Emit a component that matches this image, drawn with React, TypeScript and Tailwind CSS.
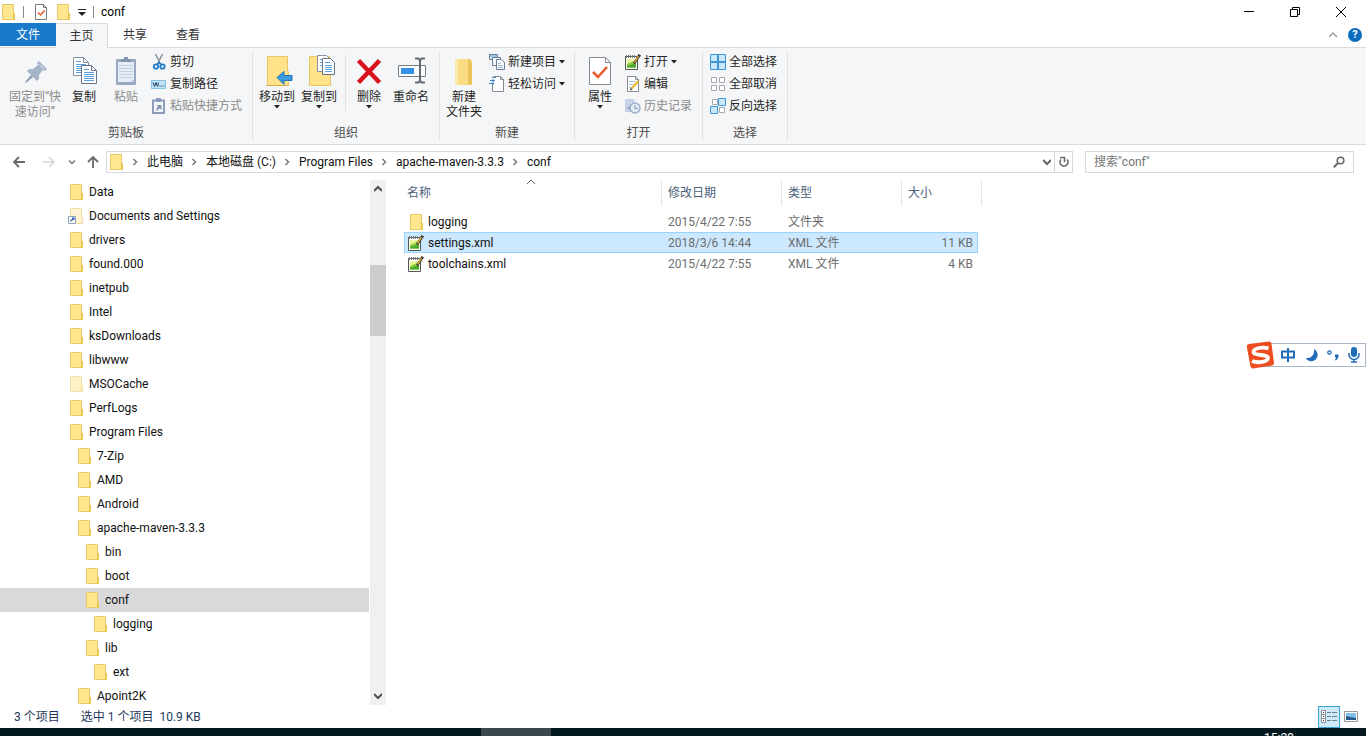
import React from 'react';

type IconProps = { className?: string };

const FolderIcon: React.FC<{ className?: string; faded?: boolean }> = ({ className = 'size-4', faded }) => (
  <svg viewBox="0 0 16 16" className={`shrink-0 ${className}`} opacity={faded ? 0.5 : 1}>
    <path d="M2 0h12v9h1v7H2z" fill="#ffe68f" />
    <path d="M2.5.5h11v9h1v6h-12z" fill="none" stroke="#e8c766" />
    <path d="M13 9h2v7h-2z" fill="#ecc652" />
  </svg>
);

const LinkedFolderIcon: React.FC = () => (
  <svg viewBox="0 0 16 16" className="size-4 shrink-0">
    <path d="M2 0h12v9h1v7H2z" fill="#fff3d3" />
    <path d="M2.5.5h11v9h1v6h-12z" fill="none" stroke="#f0dca8" />
    <path d="M.5 8.500h7v7h-7z" fill="#fff" stroke="#8fa3bd" />
    <path d="M2 14V13l2.500-2.500L3.500 9.500H6.500V12.500L5.500 11.500z" fill="#1d4fa8" />
  </svg>
);

const XmlIcon: React.FC<IconProps> = ({ className = 'size-4' }) => (
  <svg viewBox="0 0 16 16" className={`shrink-0 ${className}`}>
    <path d="M.5 2.500h12v13H.5z" fill="#fff" stroke="#4c5a50" />
    <path d="M2 5h9v8.500H2z" fill="#e9f59a" />
    <path d="M2 10l9-4v7.500H2z" fill="#8fce3c" />
    <path d="M2 12l9-3v4.500H2z" fill="#4bab2c" />
    <path d="M1.500 1v3M3.500 1v3M5.500 1v3M7.500 1v3M9.500 1v3" stroke="#777" />
    <path d="M14 2L9 9.500" stroke="#3b3b3b" strokeWidth="2.600" />
    <path d="M13.500 2L9.500 8.500" stroke="#f4b63a" strokeWidth="1.400" />
    <path d="M13.500 0l2.500 1.500-1 1.500-2.500-1.500z" fill="#333" />
  </svg>
);

const CheckDocIcon: React.FC<{ className: string }> = ({ className }) => (
  <svg viewBox="0 0 24 32" className={`shrink-0 ${className}`}>
    <path d="M1.500 2.500h16l5 5v22h-21z" fill="#fff" stroke="#858b92" />
    <path d="M17.500 2.500v5h5" fill="none" stroke="#858b92" />
    <path d="M5 17l5 5 9-10" fill="none" stroke="#ea5a24" strokeWidth="2.500" />
  </svg>
);

const SmallCheckDocIcon: React.FC = () => (
  <svg viewBox="0 0 12 16" className="h-4 w-3">
    <path d="M.5.500h8l3 3v12H.5z" fill="#fff" stroke="#747b84" />
    <path d="M8.500.5v3h3" fill="none" stroke="#747b84" />
    <path d="M3 8.500l2.500 2.500 4-4.500" fill="none" stroke="#e2582a" strokeWidth="1.500" />
  </svg>
);

const PinIcon: React.FC = () => (
  <svg viewBox="0 0 32 32" className="size-8">
    <path d="M20 6l8 8-2 2-2-1-4 5v4l-2 2-10-10 2-2h4l5-4-1-2z" fill="#a5b4c9" />
    <path d="M12 20l2 2-7 6-1-1z" fill="#8fa0b8" />
    <path d="M20 9l5 5" stroke="#c9d3e0" strokeWidth="1.500" />
  </svg>
);

const DocLines: React.FC<{ x: number; y: number; stroke: string }> = ({ x, y, stroke }) => (
  <g transform={`translate(${x} ${y})`}>
    <path d="M.5.5h10l5 5v13H.5z" fill="#fff" stroke={stroke} />
    <path d="M10.500.5v5h5" fill="none" stroke={stroke} />
    <path d="M3 4.500h5M3 7.500h10M3 9.500h10M3 11.500h10M3 13.500h10M3 15.500h10" stroke="#5ba0dc" />
  </g>
);

const CopyIcon: React.FC = () => (
  <svg viewBox="0 0 32 32" className="size-8">
    <DocLines x={5} y={2} stroke="#8591a3" />
    <DocLines x={13} y={10} stroke="#66758c" />
  </svg>
);

const PasteIcon: React.FC = () => (
  <svg viewBox="0 0 32 32" className="size-8">
    <rect x="6" y="4" width="20" height="26" rx="1" fill="#98a8c0" />
    <path d="M8 7h16v20H8z" fill="#e6edf7" />
    <path d="M9 10.500h14M9 13.500h14M9 16.500h14M9 19.500h14M9 22.500h14" stroke="#c2d0e4" />
    <path d="M11 7V4h3V2h4v2h3v3z" fill="#8394ae" />
    <path d="M21 27h3v-3z" fill="#b7c4d8" />
  </svg>
);

const MoveToIcon: React.FC = () => (
  <svg viewBox="0 0 32 32" className="size-8">
    <path d="M6.500 1.500h20v15h1v14h-21z" fill="#ffe28a" stroke="#e9c566" />
    <path d="M5.500 30.500h22" stroke="#dcae43" />
    <path d="M16 22.500l7-6v4h8v5h-8v4z" fill="#3b9be0" stroke="#2376b8" />
  </svg>
);

const CopyToIcon: React.FC = () => (
  <svg viewBox="0 0 32 32" className="size-8">
    <path d="M6.500 1.500h20v15h1v14h-21z" fill="#ffe28a" stroke="#e9c566" />
    <path d="M14.500.5h9l3 3v13h-12z" fill="#fff" stroke="#8591a3" />
    <path d="M17 4.500h6M17 7.500h7M17 10.500h7" stroke="#5ba0dc" />
    <path d="M19.500 3.500h8l4 4v12h-12z" fill="#fff" stroke="#66758c" />
    <path d="M22 7.500h5M22 10.500h7M22 12.500h7M22 14.500h7M22 16.500h7" stroke="#5ba0dc" />
  </svg>
);

const DeleteIcon: React.FC = () => (
  <svg viewBox="0 0 32 32" className="size-8">
    <path d="M5.500 5.500l21 22M26.500 5.500l-21 22" stroke="#d9111f" strokeWidth="4.500" />
  </svg>
);

const RenameIcon: React.FC = () => (
  <svg viewBox="0 0 32 32" className="size-8">
    <path d="M3.500 10.500h27v11h-27z" fill="#fff" stroke="#737b86" />
    <path d="M6 13h13v6H6z" fill="#3390e6" />
    <path d="M20 3.500h3.500l1.500 2 1.500-2H30M20 27.500h3.500l1.500-2 1.500 2H30M25 5v21" fill="none" stroke="#646b75" strokeWidth="2" />
  </svg>
);

const NewFolderIcon: React.FC = () => (
  <svg viewBox="0 0 32 32" className="size-8">
    <path d="M7 4h14v12l3 1v13H7z" fill="#f9dc82" />
    <path d="M7 4h3v26H7z" fill="#fbe9b0" />
    <path d="M20 4h2l2 3v22l-4 1z" fill="#edc35c" />
  </svg>
);

const CutIcon: React.FC = () => (
  <svg viewBox="0 0 16 16" className="size-4 shrink-0">
    <path d="M4.500 0l5 10M11.500 0l-5 10" stroke="#8a929c" strokeWidth="1.500" />
    <circle cx="5" cy="12.500" r="2.200" fill="none" stroke="#1f7cc9" strokeWidth="1.800" />
    <circle cx="11.500" cy="12.500" r="2.200" fill="none" stroke="#1f7cc9" strokeWidth="1.800" />
    <path d="M6 10.500l2-2 2 2" fill="none" stroke="#1f7cc9" strokeWidth="1.500" />
  </svg>
);

const PathIcon: React.FC = () => (
  <svg viewBox="0 0 16 16" className="size-4 shrink-0">
    <path d="M.5 4.500h14v8H.5z" fill="#bfe3f8" stroke="#85bfe2" />
    <path d="M2 6.500l1.500 4 1.500-4 1.500 4 1-4M8.500 10h1M10.500 10h1M12.500 10h1" fill="none" stroke="#233f66" />
  </svg>
);

const PasteLinkIcon: React.FC = () => (
  <svg viewBox="0 0 16 16" className="size-4 shrink-0">
    <path d="M2 2.500h11v12.500H2z" fill="#f3f6fa" stroke="#8c9cba" strokeWidth="2" />
    <path d="M5 0h5v4H5z" fill="#8c9cba" />
    <path d="M5 12.500l1-3 1-1L5.500 7H10.500v5L9 10.500l-1.500.5-1 1.500z" fill="#8394b4" />
  </svg>
);

const NewItemIcon: React.FC = () => (
  <svg viewBox="0 0 16 16" className="size-4 shrink-0">
    <path d="M.5.5h8v5h-8z" fill="#d4ebfa" stroke="#6b7d94" />
    <path d="M3.500 3.500h8v8h-8z" fill="#f2f8fd" stroke="#6b7d94" />
    <path d="M7.500 5.500h5l3 3v7h-8z" fill="#fff" stroke="#6b7d94" />
    <path d="M1 2h7" stroke="#58a5dc" />
    <path d="M9 9.500h3M9 11.500h5M9 13.500h5" stroke="#9ab9d5" />
  </svg>
);

const EasyAccessIcon: React.FC = () => (
  <svg viewBox="0 0 16 16" className="size-4 shrink-0">
    <path d="M3.500 8V15.500h11v-12l-3-3h-7" fill="#fff" stroke="#848b94" />
    <path d="M11.500.5v3h3" fill="none" stroke="#848b94" />
    <path d="M3 1.500h4M1 4.500h5M0 7.500h5M4 3v6" stroke="#3f87c7" />
  </svg>
);

const EditIcon: React.FC = () => (
  <svg viewBox="0 0 16 16" className="size-4 shrink-0">
    <path d="M2.500.5h8l3 3v12h-11z" fill="#fff" stroke="#858b92" />
    <path d="M10.500.5v3h3" fill="none" stroke="#858b92" />
    <path d="M4 5.500h6M4 8.500h4M4 11.500h3" stroke="#9cc3e4" />
    <path d="M13.500 5l-7 7.500" stroke="#eebc3c" strokeWidth="2.500" />
    <path d="M5 14.500l.5-3 2 2z" fill="#4c4c4c" />
  </svg>
);

const HistoryIcon: React.FC = () => (
  <svg viewBox="0 0 16 16" className="size-4 shrink-0">
    <path d="M0 1h9l1 4H6v9H0z" fill="#c6d2e7" />
    <circle cx="10" cy="10" r="5" fill="#e5ebf5" stroke="#9dafcf" strokeWidth="1.500" />
    <path d="M10 7v3.500h3M5 9l-2 1 3 2" fill="none" stroke="#8da0c4" strokeWidth="1.200" />
  </svg>
);

const SelectAllIcon: React.FC = () => (
  <svg viewBox="0 0 16 16" className="size-4 shrink-0">
    <path d="M.5.5h15v15H.5z" fill="#c9e8fc" stroke="#3c96d6" />
    <path d="M8 0v16M0 8h16" stroke="#3c96d6" strokeWidth="2" />
  </svg>
);

const SelectNoneIcon: React.FC = () => (
  <svg viewBox="0 0 16 16" className="size-4 shrink-0">
    <path d="M1.500 1.500h5v5h-5zM9.500 1.500h5v5h-5zM1.500 9.500h5v5h-5zM9.500 9.500h5v5h-5z" fill="#fff" stroke="#a5a9ae" />
  </svg>
);

const InvertIcon: React.FC = () => (
  <svg viewBox="0 0 16 16" className="size-4 shrink-0">
    <path d="M2.500 1.500h5v5h-5zM9.500 9.500h5v5h-5z" fill="#fff" stroke="#a5a9ae" />
    <path d="M8.500.5h7v7h-7zM.5 8.500h7v7h-7z" fill="#c9e8fc" stroke="#3c96d6" />
  </svg>
);

const Caret: React.FC = () => (
  <svg viewBox="0 0 6 4" className="h-1 w-1.5 shrink-0">
    <path d="M0 0h6L3 3.500z" fill="#222" />
  </svg>
);

const Chevron: React.FC<{ d: string; className?: string; width?: number }> = ({ d, className = '', width = 2 }) => (
  <svg viewBox="0 0 8 8" className={`size-2 shrink-0 ${className}`}>
    <path d={d} fill="none" stroke="currentColor" strokeWidth={width} />
  </svg>
);

const UP = 'M0 6l4-4 4 4';
const DOWN = 'M0 2l4 4 4-4';

type BigProps = { icon: React.ReactNode; label: React.ReactNode; caret?: boolean; disabled?: boolean; wide?: boolean };

const BigButton: React.FC<BigProps> = ({ icon, label, caret, disabled, wide }) => (
  <button
    disabled={disabled}
    className={`mt-1 flex shrink-0 flex-col items-center text-[#262626] disabled:text-[#8b8b8b] ${wide ? 'w-14' : 'w-[42px]'}`}
  >
    {icon}
    <span className="mt-[3px] leading-[15px] whitespace-nowrap">{label}</span>
    {caret && <Caret />}
  </button>
);

const SmallButton: React.FC<BigProps> = ({ icon, label, caret, disabled }) => (
  <button
    disabled={disabled}
    className="flex h-[22px] items-center gap-[3px] whitespace-nowrap text-[#262626] disabled:text-[#8b8b8b]"
  >
    {icon}
    <span>{label}</span>
    {caret && <Caret />}
  </button>
);

const Group: React.FC<{ title: string; className: string; children: React.ReactNode }> = ({ title, className, children }) => (
  <section className="flex shrink-0 py-[3px]">
    <div className="flex flex-col justify-between">
      <div className={`flex items-start ${className}`}>{children}</div>
      <h2 className="text-center leading-4 text-[#4d4d4d]">{title}</h2>
    </div>
    <div className="w-px bg-[#e2e3e4]" />
  </section>
);

const TREE = [
  { name: 'Data', level: 0 },
  { name: 'Documents and Settings', level: 0, link: true },
  { name: 'drivers', level: 0 },
  { name: 'found.000', level: 0 },
  { name: 'inetpub', level: 0 },
  { name: 'Intel', level: 0 },
  { name: 'ksDownloads', level: 0 },
  { name: 'libwww', level: 0 },
  { name: 'MSOCache', level: 0, faded: true },
  { name: 'PerfLogs', level: 0 },
  { name: 'Program Files', level: 0 },
  { name: '7-Zip', level: 1 },
  { name: 'AMD', level: 1 },
  { name: 'Android', level: 1 },
  { name: 'apache-maven-3.3.3', level: 1 },
  { name: 'bin', level: 2 },
  { name: 'boot', level: 2 },
  { name: 'conf', level: 2, selected: true },
  { name: 'logging', level: 3 },
  { name: 'lib', level: 2 },
  { name: 'ext', level: 3 },
  { name: 'Apoint2K', level: 1 },
];

const INDENT = ['pl-[68px]', 'pl-[76px]', 'pl-[84px]', 'pl-[92px]'];

const FILES = [
  { name: 'logging', date: '2015/4/22 7:55', type: '文件夹', size: '', folder: true },
  { name: 'settings.xml', date: '2018/3/6 14:44', type: 'XML 文件', size: '11 KB', selected: true },
  { name: 'toolchains.xml', date: '2015/4/22 7:55', type: 'XML 文件', size: '4 KB' },
];

const CRUMBS = ['此电脑', '本地磁盘 (C:)', 'Program Files', 'apache-maven-3.3.3', 'conf'];

const TitleBar: React.FC = () => (
  <header className="flex h-[23px] shrink-0 items-center">
    <FolderIcon />
    <span className="ml-[7px] h-3 w-px bg-[#8a8a8a]" />
    <button aria-label="属性" className="ml-[11px]">
      <SmallCheckDocIcon />
    </button>
    <button aria-label="新建文件夹" className="ml-2">
      <FolderIcon />
    </button>
    <button aria-label="自定义快速访问工具栏" className="ml-[7px]">
      <svg viewBox="0 0 8 8" className="size-2">
        <path d="M0 1.500h8" stroke="#222" />
        <path d="M0 4h8L4 8z" fill="#222" />
      </svg>
    </button>
    <span className="ml-[7px] h-3 w-px bg-[#8a8a8a]" />
    <h1 className="ml-[7px] text-black">conf</h1>
    <div className="ml-auto flex pr-0.5 text-black">
      <button aria-label="最小化" className="flex h-5 w-[46px] items-center justify-center">
        <svg viewBox="0 0 10 10" className="size-2.5">
          <path d="M0 4.500h10" stroke="currentColor" />
        </svg>
      </button>
      <button aria-label="还原" className="flex h-5 w-[46px] items-center justify-center">
        <svg viewBox="0 0 10 10" className="size-2.5">
          <path d="M.5 2.500h7v7h-7zM2.500 2.500v-2h7v7h-2" fill="none" stroke="currentColor" />
        </svg>
      </button>
      <button aria-label="关闭" className="flex h-5 w-[46px] items-center justify-center">
        <svg viewBox="0 0 10 10" className="size-2.5">
          <path d="M0 0l10 10M10 0L0 10" stroke="currentColor" />
        </svg>
      </button>
    </div>
  </header>
);

const Tabs: React.FC = () => (
  <nav className="flex h-[25px] shrink-0 items-stretch border-b border-[#dadbdc] text-[#333]">
    <button className="mb-px w-14 bg-[#1979ca] text-white">文件</button>
    <button className="-mb-px w-[52px] border-t border-r border-[#dadbdc] bg-[#f5f6f7]">主页</button>
    <button className="w-[54px]">共享</button>
    <button className="w-[52px]">查看</button>
    <div className="ml-auto flex items-center gap-[11px] pr-1">
      <button aria-label="最小化功能区" className="text-[#9a9a9a]">
        <Chevron d={UP} width={1.5} />
      </button>
      <button aria-label="帮助" className="flex size-3.5 items-center justify-center rounded-full bg-[#0a6cbd] text-[11px] font-bold text-white">
        ?
      </button>
    </div>
  </nav>
);

const Ribbon: React.FC = () => (
  <div className="flex h-[97px] shrink-0 border-b border-[#dadbdc] bg-[#f5f6f7]">
    <Group title="剪贴板" className="pr-2.5 pl-[7px]">
      <BigButton icon={<PinIcon />} label={<>固定到“快<br />速访问”</>} disabled wide />
      <BigButton icon={<CopyIcon />} label="复制" />
      <BigButton icon={<PasteIcon />} label="粘贴" disabled />
      <div className="ml-1">
        <SmallButton icon={<CutIcon />} label="剪切" />
        <SmallButton icon={<PathIcon />} label="复制路径" />
        <SmallButton icon={<PasteLinkIcon />} label="粘贴快捷方式" disabled />
      </div>
    </Group>
    <Group title="组织" className="pr-[7px] pl-[3px]">
      <BigButton icon={<MoveToIcon />} label="移动到" caret />
      <BigButton icon={<CopyToIcon />} label="复制到" caret />
      <div className="mt-1 mr-0.5 ml-[5px] h-14 w-px bg-[#e2e3e4]" />
      <BigButton icon={<DeleteIcon />} label="删除" caret />
      <BigButton icon={<RenameIcon />} label="重命名" />
    </Group>
    <Group title="新建" className="pr-[9px] pl-[3px]">
      <BigButton icon={<NewFolderIcon />} label={<>新建<br />文件夹</>} />
      <div className="ml-1">
        <SmallButton icon={<NewItemIcon />} label="新建项目" caret />
        <SmallButton icon={<EasyAccessIcon />} label="轻松访问" caret />
      </div>
    </Group>
    <Group title="打开" className="pr-[10px] pl-1">
      <BigButton icon={<CheckDocIcon className="h-8 w-6" />} label="属性" caret />
      <div className="ml-1">
        <SmallButton icon={<XmlIcon />} label="打开" caret />
        <SmallButton icon={<EditIcon />} label="编辑" />
        <SmallButton icon={<HistoryIcon />} label="历史记录" disabled />
      </div>
    </Group>
    <Group title="选择" className="pr-[10px] pl-[7px]">
      <div>
        <SmallButton icon={<SelectAllIcon />} label="全部选择" />
        <SmallButton icon={<SelectNoneIcon />} label="全部取消" />
        <SmallButton icon={<InvertIcon />} label="反向选择" />
      </div>
    </Group>
  </div>
);

const AddressBar: React.FC = () => (
  <div className="flex h-[35px] shrink-0 items-center px-3 pb-0.5">
    <button aria-label="后退" className="text-[#6a6a6a]">
      <svg viewBox="0 0 14 14" className="size-3.5">
        <path d="M13 7H2M7 2L2 7l5 5" fill="none" stroke="currentColor" strokeWidth="1.800" />
      </svg>
    </button>
    <button aria-label="前进" disabled className="ml-4 text-[#d3d3d3]">
      <svg viewBox="0 0 14 14" className="size-3.5">
        <path d="M1 7h11M7 2l5 5-5 5" fill="none" stroke="currentColor" strokeWidth="1.500" />
      </svg>
    </button>
    <button aria-label="最近浏览的位置" className="ml-3 text-[#777]">
      <Chevron d="M1 2.500l3 3 3-3" width={1.5} />
    </button>
    <button aria-label="上移" className="ml-2.5 text-[#6a6a6a]">
      <svg viewBox="0 0 14 14" className="size-3.5">
        <path d="M7 13V2M2 7l5-5 5 5" fill="none" stroke="currentColor" strokeWidth="1.800" />
      </svg>
    </button>
    <div className="ml-1.5 flex h-[22px] min-w-0 flex-1 items-center border border-[#d9d9d9] pl-px text-[#111]">
      <FolderIcon />
      <ol className="flex min-w-0 items-center whitespace-nowrap">
        {CRUMBS.map((crumb) => (
          <li key={crumb} className="flex items-center">
            <Chevron d="M2.500 1l3 3-3 3" width={1.5} className="mr-2 ml-[7px] text-[#777]" />
            <a href="#">{crumb}</a>
          </li>
        ))}
      </ol>
      <button aria-label="以前的位置" className="ml-auto pr-[3px] text-[#666]">
        <Chevron d={DOWN} />
      </button>
      <button aria-label="刷新" className="flex h-full w-[18px] items-center justify-center border-l border-[#d9d9d9] text-[#666]">
        <svg viewBox="0 0 12 12" className="size-3">
          <path d="M3 3.500a4 4 0 1 0 6 0" fill="none" stroke="currentColor" strokeWidth="1.600" />
          <path d="M2 1.500h4.500V6" fill="none" stroke="currentColor" strokeWidth="1.600" />
        </svg>
      </button>
    </div>
    <form className="ml-3 flex h-[22px] w-[269px] shrink-0 items-center border border-[#d9d9d9] px-2">
      <input
        type="text"
        aria-label="搜索"
        placeholder={'搜索"conf"'}
        className="min-w-0 flex-1 bg-transparent outline-none placeholder:text-[#757575]"
      />
      <button type="button" aria-label="开始搜索" className="text-[#666]">
        <svg viewBox="0 0 12 12" className="size-3">
          <circle cx="7.500" cy="4.500" r="3.300" fill="none" stroke="currentColor" strokeWidth="1.600" />
          <path d="M5 7L.8 11.200" stroke="currentColor" strokeWidth="2" />
        </svg>
      </button>
    </form>
  </div>
);

const TreePane: React.FC = () => (
  <aside className="flex shrink-0">
    <ul className="w-[369px] overflow-hidden text-[#111]">
      {TREE.map((item) => (
        <li key={`${item.name}-${item.level}`}>
          <button className={`flex h-6 w-full items-center gap-[5px] ${INDENT[item.level]} ${item.selected ? 'bg-[#d9d9d9]' : ''}`}>
            {item.link ? <LinkedFolderIcon /> : <FolderIcon faded={item.faded} />}
            {item.name}
          </button>
        </li>
      ))}
    </ul>
    <div className="ml-px flex w-4 flex-col items-center bg-[#f0f0f0] py-[5px] text-[#505050]">
      <Chevron d={UP} />
      <div className="mt-[72px] h-[71px] w-full bg-[#cdcdcd]" />
      <Chevron d={DOWN} className="mt-auto" />
    </div>
  </aside>
);

const FilePane: React.FC = () => (
  <main className="min-w-0 flex-1 pl-[18px]">
    <table className="w-[578px] table-fixed border-separate border-spacing-0 text-left">
      <colgroup>
        <col className="w-[258px]" />
        <col className="w-[120px]" />
        <col className="w-[120px]" />
        <col className="w-[76px]" />
        <col className="w-1" />
      </colgroup>
      <thead>
        <tr className="h-[31px] align-top text-[#4c607a]">
          <th className="font-normal">
            <div className="relative flex h-[26px] items-center border-r border-[#e5e5e5] pl-[3px]">
              名称
              <Chevron d={UP} width={1} className="absolute -top-0.5 left-[123px] text-[#666]" />
            </div>
          </th>
          <th className="font-normal">
            <div className="flex h-[26px] items-center border-r border-[#e5e5e5] pl-1.5">修改日期</div>
          </th>
          <th className="font-normal">
            <div className="flex h-[26px] items-center border-r border-[#e5e5e5] pl-1.5">类型</div>
          </th>
          <th colSpan={2} className="font-normal">
            <div className="flex h-[26px] items-center border-r border-[#e5e5e5] pl-1.5">大小</div>
          </th>
        </tr>
      </thead>
      <tbody>
        {FILES.map((file) => {
          const tone = file.selected ? 'border-[#99d1ff] bg-[#cce8ff]' : 'border-transparent';
          return (
            <tr key={file.name} className="h-[21px] text-[#6d6d6d]">
              <td className={`border-y border-l ${tone}`}>
                <div className="flex items-center gap-1 pl-[3px] text-[#111]">
                  {file.folder ? <FolderIcon /> : <XmlIcon />}
                  {file.name}
                </div>
              </td>
              <td className={`border-y pl-1.5 ${tone}`}>{file.date}</td>
              <td className={`border-y pl-1.5 ${tone}`}>{file.type}</td>
              <td className={`border-y border-r pr-1 text-right ${tone}`}>{file.size}</td>
              <td />
            </tr>
          );
        })}
      </tbody>
    </table>
  </main>
);

const StatusBar: React.FC = () => (
  <footer className="flex h-[23px] shrink-0 items-center pr-2 pl-3.5 text-[#1e395b]">
    <span>3 个项目</span>
    <span className="ml-[21px]">选中 1 个项目</span>
    <span className="ml-1.5">10.9 KB</span>
    <div className="ml-auto flex items-center gap-1">
      <button aria-label="详细信息" className="flex size-[22px] items-center justify-center border border-[#3aa3d8] bg-[#cdeaf8]">
        <svg viewBox="0 0 16 14" className="h-3.5 w-4">
          <path d="M.5.5h4v4h-4zM.5 4.500h4v4h-4zM.5 8.500h4v4h-4z" fill="#fff" stroke="#8b8f94" />
          <path d="M2 2.500h1M2 6.500h1M2 10.500h1" stroke="#333" />
          <path d="M6 2.500h4M11 2.500h5M6 6.500h4M11 6.500h5M6 10.500h4M11 10.500h5" stroke="#6c7c8a" />
        </svg>
      </button>
      <button aria-label="大图标">
        <svg viewBox="0 0 14 12" className="h-3 w-3.5">
          <path d="M.5.5h13v10H.5z" fill="#fff" stroke="#979797" />
          <path d="M2 2h10v7H2z" fill="#7fc0ea" />
          <path d="M2 5l4 1 6 1v2H2z" fill="#235a86" />
        </svg>
      </button>
    </div>
  </footer>
);

const ImeBar: React.FC = () => (
  <div className="absolute top-[341px] right-0 flex h-7 w-[120px] items-center">
    <svg viewBox="0 0 30 28" className="relative z-10 h-7 w-[30px] shrink-0">
      <path d="M3 3L23 .5q2 0 2.500 2L28 22q0 2-2 2.500L7 27.500q-2 0-2.500-2L.8 6Q.5 3.500 3 3z" fill="#ee4d22" />
      <path d="M22.500 7.500C17 5.500 7.500 7 7.500 11s15 2 14.500 6-10 5.500-16 3" fill="none" stroke="#fff" strokeWidth="3.800" />
    </svg>
    <div className="-ml-4 flex h-6 flex-1 items-center justify-between border border-[#a9b8c6] bg-white pr-[5px] pl-[19px] text-[#1f6cb8]">
      <svg viewBox="0 0 16 16" className="size-4">
        <path d="M2 4.500h12v6H2zM8 1v14" fill="none" stroke="currentColor" strokeWidth="2" />
      </svg>
      <svg viewBox="0 0 14 14" className="size-3.5">
        <path d="M9 1a6.500 6.500 0 1 1-8.500 9C6 11 10 7 9 1z" fill="currentColor" />
      </svg>
      <svg viewBox="0 0 12 12" className="size-3">
        <circle cx="2.500" cy="3.500" r="1.700" fill="none" stroke="currentColor" strokeWidth="1.200" />
        <path d="M8 5.500h3.500q.5 4-3 6l-.5-1q1.500-1 1-2H8z" fill="currentColor" />
      </svg>
      <svg viewBox="0 0 12 16" className="h-4 w-3">
        <rect x="3" y="0" width="6" height="10" rx="3" fill="currentColor" />
        <path d="M1 6v1.500a5 5 0 0 0 10 0V6M6 12v3M3 15h6" fill="none" stroke="currentColor" strokeWidth="1.500" />
      </svg>
    </div>
  </div>
);

const Taskbar: React.FC = () => (
  <div className="flex h-2 shrink-0 overflow-hidden bg-[#04191d]">
    <div className="ml-[481px] w-[70px] bg-[#3a484b]" />
    <time className="mt-0.5 mr-[72px] ml-auto leading-4 text-white">15:29</time>
  </div>
);

const App: React.FC = () => {
  return (
    <div className="relative flex h-screen flex-col overflow-hidden bg-white font-[Roboto,'Noto_Sans_CJK_SC',sans-serif] text-xs">
      <TitleBar />
      <Tabs />
      <Ribbon />
      <AddressBar />
      <div className="flex min-h-0 flex-1">
        <TreePane />
        <FilePane />
      </div>
      <StatusBar />
      <Taskbar />
      <ImeBar />
    </div>
  );
};

export default App;
